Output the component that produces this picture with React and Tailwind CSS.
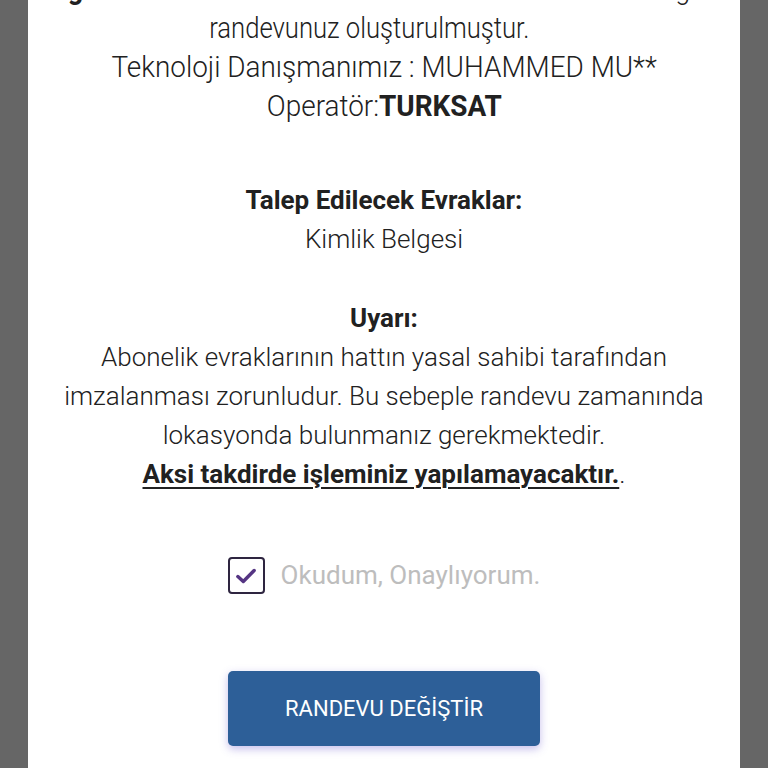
export default function App() {
  return (
    <div className="w-full h-[768px] overflow-hidden bg-[#666666] flex justify-center" style={{ fontFamily: 'Roboto, "Open Sans", sans-serif' }}>
      <div className="w-[712px] h-full bg-white flex flex-col items-center text-[#212121] overflow-hidden">
        {/* Appointment summary */}
        <div className="flex flex-col items-center font-light text-[30px] leading-[39px] -mt-[31px] whitespace-nowrap">
          <p className="scale-x-[0.9]">
            <span className="font-bold">Değerli Abonemiz</span> 17.05.2024 tarihinde saat 14:00 mağaza
          </p>
          <p className="scale-x-[0.855] -translate-x-[15px]">randevunuz oluşturulmuştur.</p>
          <p className="scale-x-[0.93]">Teknoloji Danışmanımız : MUHAMMED MU**</p>
          <p className="scale-x-[0.93]">
            Operatör:<span className="font-bold">TURKSAT</span>
          </p>
        </div>

        {/* Documents */}
        <div className="mt-[56px] flex flex-col items-center text-[26px] leading-[39px]">
          <p className="font-bold">Talep Edilecek Evraklar:</p>
          <p className="font-light">Kimlik Belgesi</p>
        </div>

        {/* Warning */}
        <div className="mt-[40px] flex flex-col items-center text-center text-[26px] leading-[39px] whitespace-nowrap">
          <p className="font-bold">Uyarı:</p>
          <p className="font-light">
            Abonelik evraklarının hattın yasal sahibi tarafından
            <br />
            imzalanması zorunludur. Bu sebeple randevu zamanında
            <br />
            lokasyonda bulunmanız gerekmektedir.
          </p>
          <p className="font-light">
            <span className="font-bold underline underline-offset-4 decoration-2">Aksi takdirde işleminiz yapılamayacaktır.</span>.
          </p>
        </div>

        {/* Consent */}
        <label className="mt-[62px] flex items-center gap-4 cursor-pointer">
          <span className="w-[37px] h-[37px] rounded-[4px] border-2 border-[#2e2540] flex items-center justify-center">
            <svg width="26" height="26" viewBox="0 0 24 24" fill="none">
              <path d="M4.5 12.5l5 4.5L19.5 7" stroke="#553583" strokeWidth="3.2" strokeLinecap="round" strokeLinejoin="round" />
            </svg>
          </span>
          <span className="text-[26px] text-[#bdbdbd]">Okudum, Onaylıyorum.</span>
        </label>

        {/* Action */}
        <button className="mt-[76px] w-[312px] h-[75px] rounded-[5px] bg-[#2d5f98] text-white text-[22px] uppercase shadow-[0_3px_8px_rgba(90,70,200,0.35)]">
          RANDEVU DEĞİŞTİR
        </button>
      </div>
    </div>
  )
}
